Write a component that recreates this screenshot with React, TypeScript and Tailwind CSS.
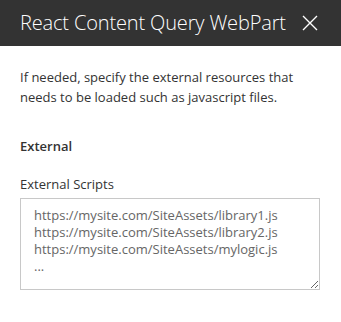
export default function App() {
  return (
    <div className="w-[341px] h-[322px] bg-white font-['Open_Sans',sans-serif] text-[#333333]">
      <div className="flex h-[46px] items-center justify-between bg-[#333333] pl-5 pr-[23px]">
        <h1 className="text-[20px] font-light leading-none tracking-[-0.15px] text-white">React Content Query WebPart</h1>
        <button type="button" aria-label="Close" className="text-white">
          <svg width="16" height="16" viewBox="0 0 16 16" fill="none" stroke="currentColor" strokeWidth="1.4">
            <path d="M1 1 L15 15 M15 1 L1 15" />
          </svg>
        </button>
      </div>
      <div className="px-5">
        <p className="mt-[21px] text-[13px] leading-5">
          If needed, specify the external resources that needs to be loaded such as javascript files.
        </p>
        <h2 className="mt-[29px] text-[13px] font-semibold leading-5">External</h2>
        <label className="mt-[18px] block text-[13px] leading-5">External Scripts</label>
        <textarea
          className="mt-1 block h-[92px] w-[300px] border border-[#c8c8c8] px-[13px] pt-2 text-[13px] leading-[17px] outline-none placeholder:text-[#666666]"
          placeholder={"https://mysite.com/SiteAssets/library1.js\nhttps://mysite.com/SiteAssets/library2.js\nhttps://mysite.com/SiteAssets/mylogic.js\n..."}
        />
      </div>
    </div>
  );
}
